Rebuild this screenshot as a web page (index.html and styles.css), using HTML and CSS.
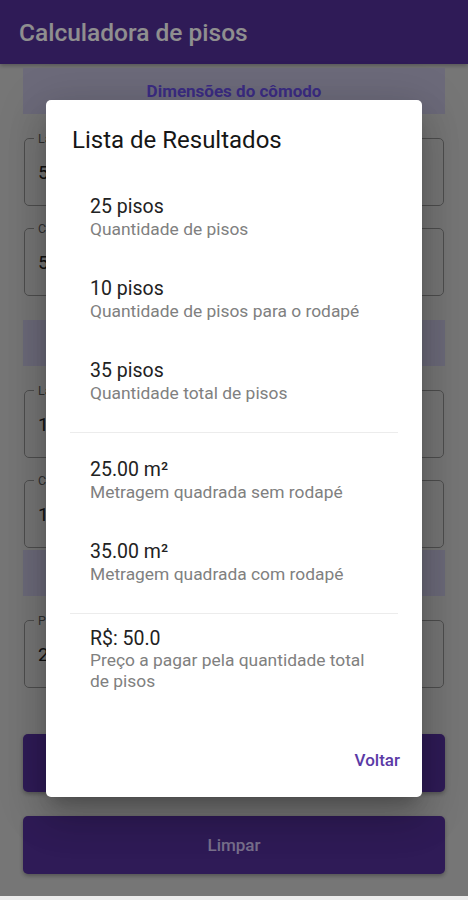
FILE: index.html
```html
<!DOCTYPE html>
<html lang="pt-BR">
<head>
  <meta charset="UTF-8" />
  <meta name="viewport" content="width=device-width, initial-scale=1.0" />
  <title>Calculadora de pisos</title>
  <link rel="stylesheet" href="styles.css">
</head>
<body>
  <div class="screen">
    <header class="app-bar">
      <h1>Calculadora de pisos</h1>
    </header>

    <main class="content">
      <div class="section-title section-first">Dimensões do cômodo</div>
      <div class="field">
        <span class="field-label">Largura (m)</span>
        <span class="field-value">5</span>
      </div>
      <div class="field">
        <span class="field-label">Comprimento (m)</span>
        <span class="field-value">5</span>
      </div>

      <div class="section-title">Dimensões do piso</div>
      <div class="field">
        <span class="field-label">Largura (m)</span>
        <span class="field-value">1</span>
      </div>
      <div class="field">
        <span class="field-label">Comprimento (m)</span>
        <span class="field-value">1</span>
      </div>

      <div class="section-title section-tight">Preço</div>
      <div class="field">
        <span class="field-label">Preço do m²</span>
        <span class="field-value">2</span>
      </div>

      <button class="main-button calc-button">Calcular</button>
      <button class="main-button">Limpar</button>
    </main>

    <div class="overlay">
      <div class="dialog">
        <h2>Lista de Resultados</h2>

        <ul class="result-list">
          <li class="result">
            <span class="result-value">25 pisos</span>
            <span class="result-label">Quantidade de pisos</span>
          </li>
          <li class="result">
            <span class="result-value">10 pisos</span>
            <span class="result-label">Quantidade de pisos para o rodapé</span>
          </li>
          <li class="result">
            <span class="result-value">35 pisos</span>
            <span class="result-label">Quantidade total de pisos</span>
          </li>
          <li class="divider"></li>
          <li class="result">
            <span class="result-value">25.00 m²</span>
            <span class="result-label">Metragem quadrada sem rodapé</span>
          </li>
          <li class="result">
            <span class="result-value">35.00 m²</span>
            <span class="result-label">Metragem quadrada com rodapé</span>
          </li>
          <li class="divider"></li>
          <li class="result result-three">
            <span class="result-value">R$: 50.0</span>
            <span class="result-label">Preço a pagar pela quantidade total de pisos</span>
          </li>
        </ul>

        <div class="dialog-actions">
          <button class="text-button">Voltar</button>
        </div>
      </div>
    </div>
  </div>
</body>
</html>
```

FILE: styles.css
```css
* {
  box-sizing: border-box;
}

body {
  margin: 0;
  font-family: Roboto, 'Noto Sans', sans-serif;
  background-color: #ececec;
}

.screen {
  position: relative;
  height: 896px;
  background-color: #d3d3d3;
  overflow: hidden;
}

/* top bar */
.app-bar {
  height: 64px;
  background-color: #55309c;
  display: flex;
  align-items: center;
  padding: 0 19px;
  box-shadow: 0 2px 4px rgba(0, 0, 0, 0.25);
}

.app-bar h1 {
  margin: 0;
  font-size: 24.5px;
  font-weight: 500;
  color: #fff;
}

/* form behind the dialog */
.content {
  padding: 4px 23px 0;
  display: flex;
  flex-direction: column;
}

.section-title {
  height: 46px;
  margin-top: 24px;
  background-color: #c1bdda;
  color: #6a4fe8;
  font-size: 17px;
  font-weight: bold;
  display: flex;
  align-items: center;
  justify-content: center;
}

.section-first {
  margin-top: 0;
}

.section-tight {
  margin-top: 2px;
}

.field {
  position: relative;
  height: 68px;
  margin: 24px 1px 0;
  border: 1px solid #8c8c8c;
  border-radius: 5px;
  display: flex;
  align-items: center;
  padding-left: 13px;
}

.field + .field {
  margin-top: 22px;
}

.field-label {
  position: absolute;
  top: -8px;
  left: 9px;
  padding: 0 4px;
  background-color: #d3d3d3;
  font-size: 12.5px;
  color: #555;
}

.field-value {
  font-size: 19px;
  color: #222;
}

.main-button {
  height: 58px;
  margin-top: 24px;
  border: none;
  border-radius: 5px;
  background-color: #55309c;
  color: #d6c8fa;
  font-family: inherit;
  font-size: 17px;
  font-weight: 500;
  box-shadow: 0 2px 4px rgba(0, 0, 0, 0.3);
}

.calc-button {
  margin-top: 46px;
}

/* dialog */
.overlay {
  position: absolute;
  top: 0;
  left: 0;
  right: 0;
  bottom: 0;
  background-color: rgba(0, 0, 0, 0.44);
  display: flex;
  align-items: center;
  justify-content: center;
}

.dialog {
  width: 376px;
  background-color: #fff;
  border-radius: 5px;
  padding-top: 24px;
  box-shadow: 0 11px 15px -7px rgba(0, 0, 0, 0.2), 0 24px 38px 3px rgba(0, 0, 0, 0.14), 0 9px 46px 8px rgba(0, 0, 0, 0.12);
}

.dialog h2 {
  margin: 0;
  padding: 0 26px;
  font-size: 24px;
  font-weight: normal;
  line-height: 32px;
  color: #161616;
}

.result-list {
  list-style: none;
  margin: 0;
  padding: 21px 24px 24px;
}

.result {
  display: flex;
  flex-direction: column;
  padding: 18px 20px;
}

.result-value {
  font-size: 19.5px;
  line-height: 23px;
  color: #222;
}

.result-label {
  font-size: 17.4px;
  line-height: 23px;
  color: #808080;
}

.result-three {
  padding: 6px 20px 12px;
}

.result-three .result-label {
  line-height: 21px;
}

.divider {
  height: 1px;
  margin: 9px 0 7px;
  background-color: #ececec;
}

.dialog-actions {
  display: flex;
  justify-content: flex-end;
  padding: 10px 12px 15px;
}

.text-button {
  height: 44px;
  padding: 0 10px;
  border: none;
  background: none;
  font-family: inherit;
  font-size: 17px;
  font-weight: 500;
  color: #5b3aa6;
}
```
